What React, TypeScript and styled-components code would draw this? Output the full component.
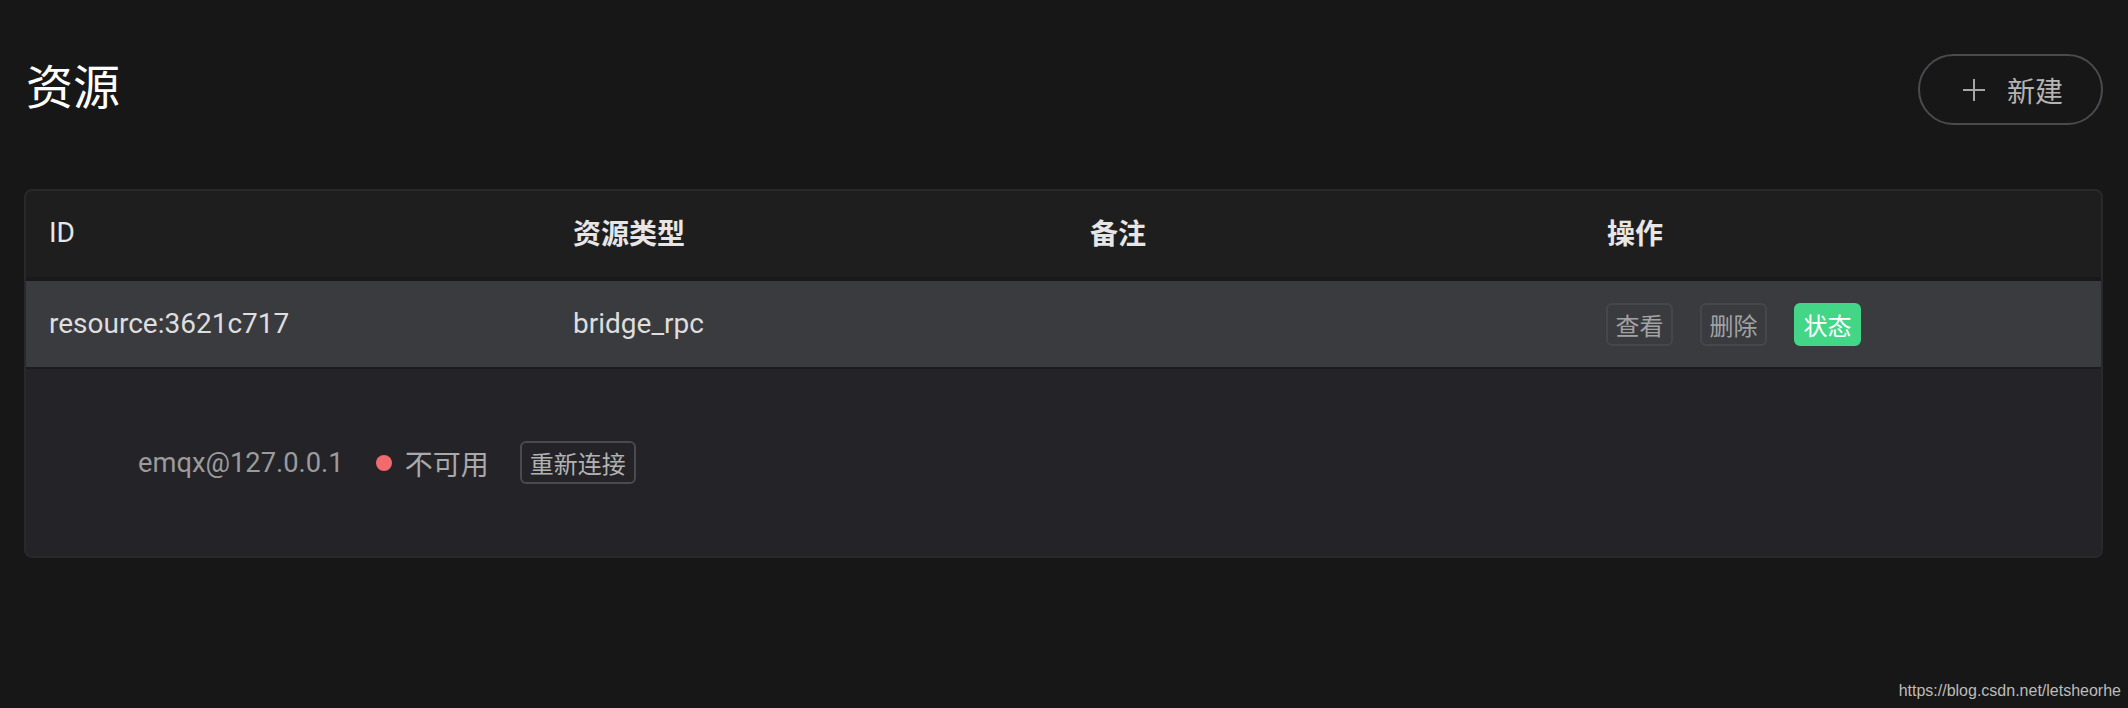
import React from "react";
import styled, { createGlobalStyle } from "styled-components";

const GlobalStyle = createGlobalStyle`
  html, body {
    margin: 0;
    padding: 0;
    background: #171717;
  }
  body {
    font-family: Roboto, "Noto Sans CJK SC", sans-serif;
  }
`;

const Page = styled.div`
  min-height: 708px;
  box-sizing: border-box;
  padding: 54px 25px 0 24px;
  display: flex;
  flex-direction: column;
  background: #171717;
`;

const TopBar = styled.div`
  display: flex;
  align-items: center;
  justify-content: space-between;
  height: 71px;
`;

const Title = styled.h1`
  margin: 0 0 12px;
  font-family: "Noto Sans CJK SC", sans-serif;
  font-size: 47px;
  font-weight: 400;
  color: #ffffff;
  line-height: 1;
  padding-left: 2px;
`;

const NewButton = styled.button`
  box-sizing: border-box;
  width: 185px;
  height: 71px;
  border: 2px solid #4b4b4f;
  border-radius: 36px;
  background: transparent;
  display: flex;
  align-items: center;
  justify-content: center;
  gap: 21px;
  padding: 0 0 0 4px;
  color: #b4b4b4;
  font-family: "Noto Sans CJK SC", sans-serif;
  font-size: 28px;
  cursor: pointer;
`;

const Card = styled.div`
  margin-top: 64px;
  border: 2px solid #29292b;
  border-radius: 8px;
  overflow: hidden;
  background: #242328;
`;

const Grid = styled.div`
  display: grid;
  grid-template-columns: 524px 517px 517px 1fr;
`;

const HeaderRow = styled(Grid)`
  height: 86px;
  background: #1f1e1f;
  border-bottom: 4px solid #19191a;
`;

const BodyRow = styled(Grid)`
  height: 86px;
  background: #3a3b3f;
  border-bottom: 2px solid #1c1c1e;
`;

const HeadCell = styled.div<{ $bold?: boolean }>`
  display: flex;
  align-items: center;
  padding: 0 0 4px 23px;
  font-size: 28px;
  font-weight: ${(p) => (p.$bold ? 700 : 400)};
  color: #e6e6e6;
`;

const Cell = styled.div<{ $actions?: boolean }>`
  display: flex;
  align-items: center;
  padding: 0 0 2px ${(p) => (p.$actions ? 22 : 23)}px;
  font-size: 28px;
  color: #dedede;
  gap: 27px;
`;

const ActionButton = styled.button<{ $primary?: boolean }>`
  box-sizing: border-box;
  height: 43px;
  padding: 0 7.5px;
  margin-top: 3px;
  border-radius: 6px;
  border: 2px solid ${(p) => (p.$primary ? "#43d686" : "#46474c")};
  background: ${(p) => (p.$primary ? "#43d686" : "transparent")};
  color: ${(p) => (p.$primary ? "#ffffff" : "#a2a2a2")};
  font-family: "Noto Sans CJK SC", sans-serif;
  font-size: 24px;
  line-height: 1;
  cursor: pointer;
`;

const Expand = styled.div`
  height: 187px;
  display: flex;
  align-items: center;
  padding-left: 112px;
`;

const Host = styled.span`
  font-size: 27.3px;
  color: #9b9b9b;
  margin-right: 32px;
`;

const Dot = styled.span`
  width: 16px;
  height: 16px;
  border-radius: 50%;
  background: #f16a6e;
  margin-right: 13px;
`;

const StatusText = styled.span`
  font-family: "Noto Sans CJK SC", sans-serif;
  font-size: 28px;
  color: #a9a9a9;
  margin-right: 31px;
`;

const ReconnectButton = styled.button`
  box-sizing: border-box;
  height: 43px;
  padding: 0 8px;
  border-radius: 6px;
  border: 2px solid #4a4a4f;
  background: transparent;
  color: #b2b2b2;
  font-family: "Noto Sans CJK SC", sans-serif;
  font-size: 24px;
  line-height: 1;
  cursor: pointer;
`;

const Watermark = styled.div`
  margin-top: auto;
  align-self: flex-end;
  margin-right: -18px;
  padding-bottom: 8px;
  font-family: "Liberation Sans", Arial, sans-serif;
  font-size: 16px;
  color: #bcbcbc;
`;

const PlusIcon = () => (
  <svg width="24" height="24" viewBox="0 0 24 24" fill="none">
    <line x1="12" y1="1" x2="12" y2="23" stroke="#a6a6a6" strokeWidth="2" />
    <line x1="1" y1="12" x2="23" y2="12" stroke="#a6a6a6" strokeWidth="2" />
  </svg>
);

export default function App() {
  return (
    <>
      <GlobalStyle />
      <Page>
        <TopBar>
          <Title>资源</Title>
          <NewButton>
            <PlusIcon />
            <span>新建</span>
          </NewButton>
        </TopBar>
        <Card>
          <HeaderRow>
            <HeadCell>ID</HeadCell>
            <HeadCell $bold>资源类型</HeadCell>
            <HeadCell $bold>备注</HeadCell>
            <HeadCell $bold>操作</HeadCell>
          </HeaderRow>
          <BodyRow>
            <Cell>resource:3621c717</Cell>
            <Cell>bridge_rpc</Cell>
            <Cell></Cell>
            <Cell $actions>
              <ActionButton>查看</ActionButton>
              <ActionButton>删除</ActionButton>
              <ActionButton $primary>状态</ActionButton>
            </Cell>
          </BodyRow>
          <Expand>
            <Host>emqx@127.0.0.1</Host>
            <Dot />
            <StatusText>不可用</StatusText>
            <ReconnectButton>重新连接</ReconnectButton>
          </Expand>
        </Card>
        <Watermark>https://blog.csdn.net/letsheorhe</Watermark>
      </Page>
    </>
  );
}
